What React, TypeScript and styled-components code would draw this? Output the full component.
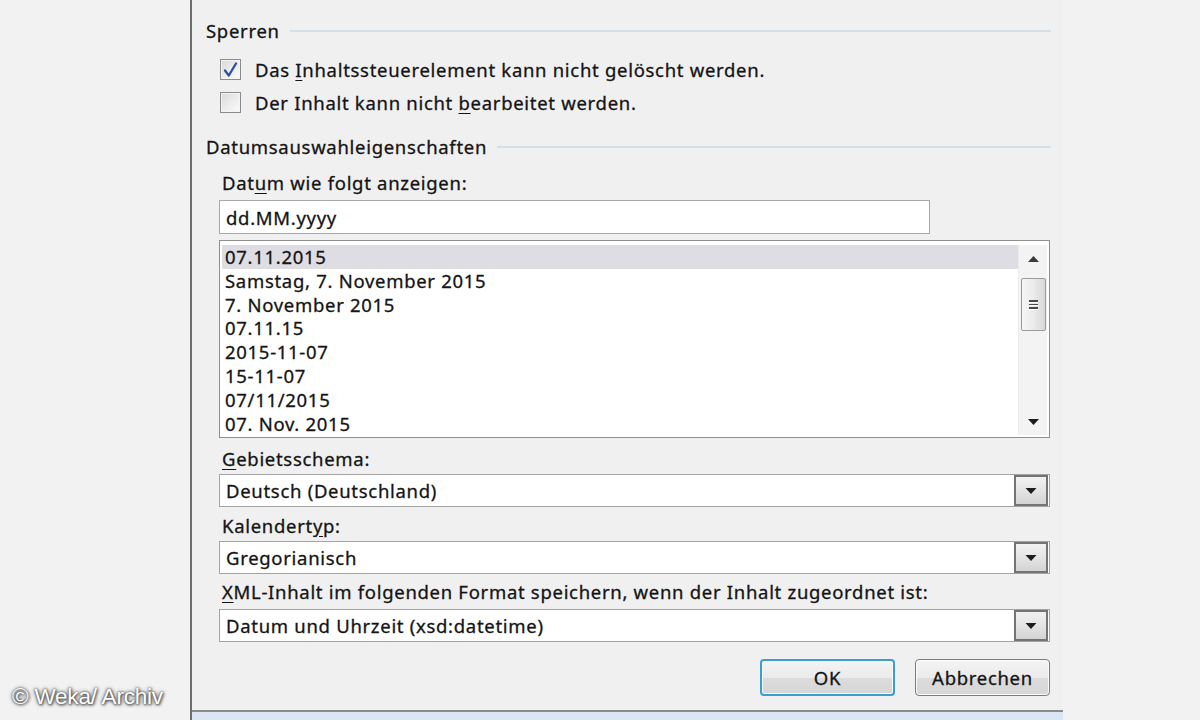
import styled, { createGlobalStyle, css } from 'styled-components';

const GlobalStyle = createGlobalStyle`
  html, body {
    margin: 0;
    padding: 0;
    background: #f2f2f2;
  }
  body {
    font-family: "Noto Sans", "Open Sans", sans-serif;
    color: #141414;
  }
`;

// Segoe-like dialog text, scaled up as in the screenshot
const uiText = css`
  font-family: "Noto Sans", "Open Sans", sans-serif;
  font-size: 18.5px;
  letter-spacing: 0.7px;
  color: #141414;
  -webkit-text-stroke: 0.3px #141414;
  white-space: nowrap;
`;

const Page = styled.div`
  display: grid;
  grid-template-columns: 190px 873px 1fr;
  width: 1200px;
  height: 720px;
  overflow: hidden;
  background: #f2f2f2;
`;

const Side = styled.div`
  display: flex;
  flex-direction: column;
  justify-content: flex-end;
  padding: 0 0 10px 12px;
`;

const Watermark = styled.div`
  font-family: "Liberation Sans", Arial, sans-serif;
  font-size: 22.5px;
  letter-spacing: -0.2px;
  color: #ffffff;
  text-shadow: 0 0 2px #444, 0 0 4px #666, 1px 1px 3px #444;
  white-space: nowrap;
`;

const Dialog = styled.div`
  display: flex;
  flex-direction: column;
  background: #f0f0f0;
  border-left: 2px solid #6e6e6e;
`;

const Body = styled.div`
  flex: 1;
  display: flex;
  flex-direction: column;
  padding: 18px 12px 0 14px;
`;

const Footer = styled.div`
  height: 8px;
  border-top: 2px solid #8a8a8a;
  background: #dae6f3;
`;

const GroupHeader = styled.div<{ $top?: number }>`
  ${uiText};
  display: flex;
  align-items: center;
  gap: 10px;
  height: 24px;
  margin-top: ${(p) => p.$top ?? 0}px;
`;

const GroupLine = styled.div`
  flex: 1;
  height: 2px;
  background: #d6dfe6;
  margin-top: 1px;
`;

const CheckRow = styled.label<{ $top?: number }>`
  ${uiText};
  display: flex;
  align-items: center;
  gap: 14px;
  height: 33px;
  margin-top: ${(p) => p.$top ?? 0}px;
  padding-left: 14px;
`;

const Box = styled.span`
  display: flex;
  align-items: center;
  justify-content: center;
  width: 19px;
  height: 19px;
  border: 1px solid #8c8c8c;
  box-shadow: inset 0 0 0 1px #f4f4f4;
  background: linear-gradient(135deg, #d9d9d9 0%, #efefef 60%, #fbfbfb 100%);
`;

const Section = styled.div`
  display: flex;
  flex-direction: column;
  padding-left: 13px;
`;

const FieldLabel = styled.div<{ $top?: number }>`
  ${uiText};
  height: 24px;
  line-height: 24px;
  margin-top: ${(p) => p.$top ?? 0}px;
  padding-left: 3px;
`;

const Key = styled.u`
  text-underline-offset: 3px;
`;

const TextInput = styled.div`
  ${uiText};
  width: 711px;
  height: 34px;
  margin-top: 5px;
  box-sizing: border-box;
  display: flex;
  align-items: center;
  padding-left: 6px;
  background: #ffffff;
  border: 1px solid #a8a8a8;
`;

const ListBox = styled.div`
  display: flex;
  width: 831px;
  height: 198px;
  margin-top: 6px;
  box-sizing: border-box;
  background: #ffffff;
  border: 1px solid #8f8f8f;
  padding: 4px 2px 2px 2px;
`;

const Items = styled.div`
  flex: 1;
  display: flex;
  flex-direction: column;
`;

const Item = styled.div<{ $selected?: boolean }>`
  ${uiText};
  height: 23.8px;
  line-height: 23.8px;
  padding-left: 3px;
  flex-shrink: 0;
  background: ${(p) => (p.$selected ? '#dddde3' : 'transparent')};
`;

const ScrollBar = styled.div`
  width: 28px;
  display: flex;
  flex-direction: column;
  align-items: center;
  background: #f3f3f3;
  border-left: 1px solid #ebebeb;
`;

const Arrow = styled.div`
  height: 27px;
  display: flex;
  align-items: center;
  justify-content: center;
`;

const Thumb = styled.div`
  width: 25px;
  height: 53px;
  box-sizing: border-box;
  margin-top: 6px;
  border: 1px solid #9b9b9b;
  border-radius: 2px;
  background: linear-gradient(90deg, #f6f6f6 0%, #ebebeb 50%, #d8d8d8 100%);
  display: flex;
  flex-direction: column;
  align-items: center;
  justify-content: center;
  gap: 2px;
`;

const Grip = styled.span`
  width: 9px;
  height: 1.5px;
  background: #4a4a4a;
  box-shadow: 0 1px 0 #fff;
`;

const Track = styled.div`
  flex: 1;
`;

const Combo = styled.div<{ $top?: number }>`
  ${uiText};
  display: flex;
  align-items: center;
  width: 831px;
  height: 33px;
  margin-top: ${(p) => p.$top ?? 0}px;
  box-sizing: border-box;
  background: #ffffff;
  border: 1px solid #a3a3a3;
  padding-left: 6px;
`;

const ComboText = styled.span`
  flex: 1;
`;

const DropButton = styled.span`
  width: 34px;
  height: 31px;
  box-sizing: border-box;
  margin-right: 1px;
  display: flex;
  align-items: center;
  justify-content: center;
  border: 2px solid #747474;
  background: linear-gradient(180deg, #f2f2f2 0%, #e4e4e4 50%, #d3d3d3 100%);
`;

const Buttons = styled.div`
  display: flex;
  justify-content: flex-end;
  gap: 20px;
  margin-top: 17px;
  padding-right: 1px;
`;

const Button = styled.button<{ $primary?: boolean }>`
  ${uiText};
  width: 135px;
  height: 37px;
  border-radius: 4px;
  border: ${(p) => (p.$primary ? '2px solid #3a9fcf' : '1px solid #7c7c7c')};
  box-shadow: inset 0 0 0 1px #fafafa;
  background: linear-gradient(180deg, #f4f4f4 0%, #ebebeb 50%, #dcdcdc 51%, #d6d6d6 100%);
  padding: 0;
`;

const UpArrow = () => (
  <svg width="11" height="6" viewBox="0 0 11 6">
    <path d="M0 6 L5.5 0 L11 6 Z" fill="#3a3a3a" />
  </svg>
);

const DownArrow = ({ w = 11 }: { w?: number }) => (
  <svg width={w} height="6" viewBox="0 0 11 6">
    <path d="M0 0 L11 0 L5.5 6 Z" fill="#1c1c1c" />
  </svg>
);

const Tick = () => (
  <svg width="15" height="16" viewBox="0 0 15 16">
    <path d="M2 8.5 L5.8 13.5 L13 1.5" fill="none" stroke="#2d4fa3" strokeWidth="2.3" strokeLinecap="round" strokeLinejoin="round" />
  </svg>
);

const dates = [
  '07.11.2015',
  'Samstag, 7. November 2015',
  '7. November 2015',
  '07.11.15',
  '2015-11-07',
  '15-11-07',
  '07/11/2015',
  '07. Nov. 2015',
];

export default function App() {
  return (
    <>
      <GlobalStyle />
      <Page>
        <Side>
          <Watermark>© Weka/ Archiv</Watermark>
        </Side>
        <Dialog>
          <Body>
            <GroupHeader>
              <span>Sperren</span>
              <GroupLine />
            </GroupHeader>
            <CheckRow $top={11}>
              <Box>
                <Tick />
              </Box>
              <span>
                Das <Key>I</Key>nhaltssteuerelement kann nicht gelöscht werden.
              </span>
            </CheckRow>
            <CheckRow>
              <Box />
              <span>
                Der Inhalt kann nicht <Key>b</Key>earbeitet werden.
              </span>
            </CheckRow>
            <GroupHeader $top={15}>
              <span>Datumsauswahleigenschaften</span>
              <GroupLine />
            </GroupHeader>
            <Section>
              <FieldLabel $top={13}>
                Dat<Key>u</Key>m wie folgt anzeigen:
              </FieldLabel>
              <TextInput>dd.MM.yyyy</TextInput>
              <ListBox>
                <Items>
                  {dates.map((d, i) => (
                    <Item key={d} $selected={i === 0}>
                      {d}
                    </Item>
                  ))}
                </Items>
                <ScrollBar>
                  <Arrow>
                    <UpArrow />
                  </Arrow>
                  <Thumb>
                    <Grip />
                    <Grip />
                    <Grip />
                  </Thumb>
                  <Track />
                  <Arrow>
                    <DownArrow />
                  </Arrow>
                </ScrollBar>
              </ListBox>
              <FieldLabel $top={9}>
                <Key>G</Key>ebietsschema:
              </FieldLabel>
              <Combo $top={3}>
                <ComboText>Deutsch (Deutschland)</ComboText>
                <DropButton>
                  <DownArrow w={12} />
                </DropButton>
              </Combo>
              <FieldLabel $top={7}>
                Kalendert<Key>y</Key>p:
              </FieldLabel>
              <Combo $top={3}>
                <ComboText>Gregorianisch</ComboText>
                <DropButton>
                  <DownArrow w={12} />
                </DropButton>
              </Combo>
              <FieldLabel $top={6}>
                <Key>X</Key>ML-Inhalt im folgenden Format speichern, wenn der Inhalt zugeordnet ist:
              </FieldLabel>
              <Combo $top={5}>
                <ComboText>Datum und Uhrzeit (xsd:datetime)</ComboText>
                <DropButton>
                  <DownArrow w={12} />
                </DropButton>
              </Combo>
              <Buttons>
                <Button $primary>OK</Button>
                <Button>Abbrechen</Button>
              </Buttons>
            </Section>
          </Body>
          <Footer />
        </Dialog>
        <div />
      </Page>
    </>
  );
}
